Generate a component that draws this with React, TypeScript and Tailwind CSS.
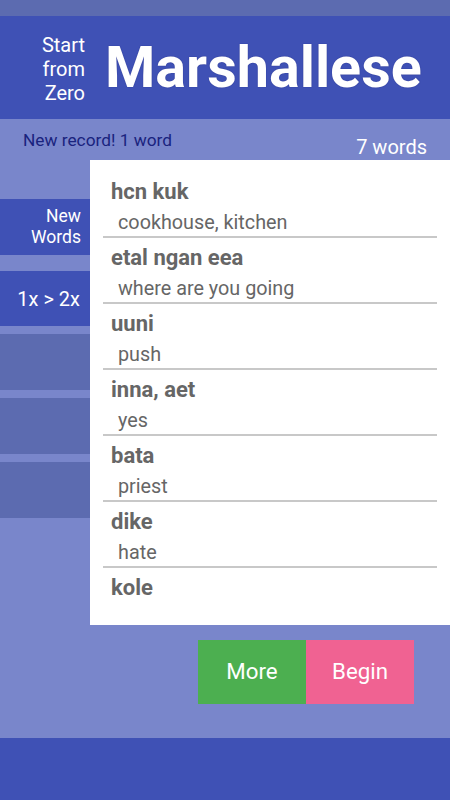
import React from "react";

const words = [
  { word: "hcn kuk", meaning: "cookhouse, kitchen" },
  { word: "etal ngan eea", meaning: "where are you going" },
  { word: "uuni", meaning: "push" },
  { word: "inna, aet", meaning: "yes" },
  { word: "bata", meaning: "priest" },
  { word: "dike", meaning: "hate" },
  { word: "kole", meaning: "" },
];

export default function App() {
  return (
    <div
      className="w-[450px] h-[800px] flex flex-col bg-[#7986cb] overflow-hidden"
      style={{ fontFamily: "Roboto, 'Noto Sans', sans-serif" }}
    >
      {/* status bar */}
      <div className="h-[16px] bg-[#5c6bb0]" />

      {/* header */}
      <header className="h-[103px] bg-[#3f51b5] flex items-center">
        <div className="w-[85px] text-right text-white text-[20px] leading-[24px] pt-[3px]">
          Start
          <br />
          from
          <br />
          Zero
        </div>
        <h1 className="ml-[20px] text-white font-bold text-[57.5px] leading-none [text-shadow:0_0_1px_#1a237e]">
          Marshallese
        </h1>
      </header>

      {/* body */}
      <main className="flex-1 flex flex-col">
        <div className="h-[41px] flex justify-between pl-[23px] pr-[23px]">
          <span className="text-[#1a237e] text-[17.3px] leading-[20px] mt-[11px]">
            New record! 1 word
          </span>
          <span className="text-white text-[20px] leading-[24px] mt-[16px]">
            7 words
          </span>
        </div>

        <div className="flex">
          {/* side nav */}
          <nav className="w-[90px] shrink-0 flex flex-col pt-[39px]">
            <button className="h-[56px] bg-[#3f51b5] text-white text-[17.5px] leading-[21px] text-right pr-[9px]">
              New
              <br />
              Words
            </button>
            <button className="h-[55px] mt-[16px] bg-[#3f51b5] text-white text-[20px] text-right pr-[10px]">
              1x &gt; 2x
            </button>
            <div className="h-[56px] mt-[8px] bg-[#5c6bb0]" />
            <div className="h-[56px] mt-[8px] bg-[#5c6bb0]" />
            <div className="h-[56px] mt-[8px] bg-[#5c6bb0]" />
          </nav>

          {/* word list */}
          <section className="flex-1 bg-white pt-[12px] pb-[24px] pl-[13px] pr-[13px]">
            {words.map((w, i) => (
              <div key={w.word}>
                <div className="pt-[7px]">
                  <div className="pl-[8px] text-[#666666] font-bold text-[22px] leading-[26px]">
                    {w.word}
                  </div>
                  {w.meaning && (
                    <div className="pl-[15px] mt-[5px] text-[#666666] text-[19.8px] leading-[26px]">
                      {w.meaning}
                    </div>
                  )}
                </div>
                {i < words.length - 1 && <div className="h-[2px] bg-[#c8c8c8]" />}
              </div>
            ))}
          </section>
        </div>

        <div className="flex justify-end pr-[36px] mt-[15px]">
          <button className="w-[108px] h-[64px] bg-[#4caf50] text-white text-[22.3px]">
            More
          </button>
          <button className="w-[108px] h-[64px] bg-[#f06292] text-white text-[22.3px]">
            Begin
          </button>
        </div>
      </main>

      {/* bottom bar */}
      <footer className="h-[62px] bg-[#3f51b5]" />
    </div>
  );
}
